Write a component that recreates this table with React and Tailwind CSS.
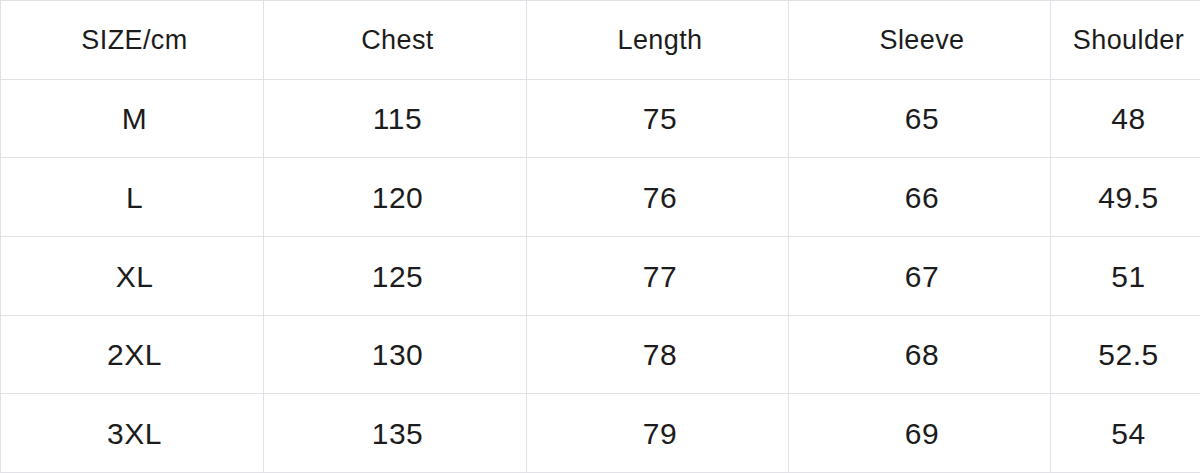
import React from 'react';

const header = ['SIZE/cm', 'Chest', 'Length', 'Sleeve', 'Shoulder'];

const rows = [
  ['M', '115', '75', '65', '48'],
  ['L', '120', '76', '66', '49.5'],
  ['XL', '125', '77', '67', '51'],
  ['2XL', '130', '78', '68', '52.5'],
  ['3XL', '135', '79', '69', '54'],
];

const rowHeights = ['h-[79px]', 'h-[78px]', 'h-[79px]', 'h-[79px]', 'h-[78px]', 'h-[79px]'];

const Cell = ({ children, head, h }) => (
  <div
    className={`${h} pl-[5px] flex items-center justify-center border-r border-b border-[#e1e1e7] text-[#1c1c1c] ${
      head ? 'text-[27px] tracking-[0.4px]' : 'text-[30px] tracking-[0.5px]'
    }`}
  >
    {children}
  </div>
);

export default function App() {
  return (
    <div className="w-[1200px] h-[473px] overflow-hidden bg-white" style={{ fontFamily: '"Liberation Sans", Arial, sans-serif' }}>
      <div className="w-[1202px] grid grid-cols-[263px_263px_262px_262px_151px] border-t border-l border-[#e1e1e7]">
        {header.map((t) => (
          <Cell key={t} head h={rowHeights[0]}>
            {t}
          </Cell>
        ))}
        {rows.map((r, i) =>
          r.map((v, j) => (
            <Cell key={`${i}-${j}`} h={rowHeights[i + 1]}>
              {v}
            </Cell>
          ))
        )}
      </div>
    </div>
  );
}
